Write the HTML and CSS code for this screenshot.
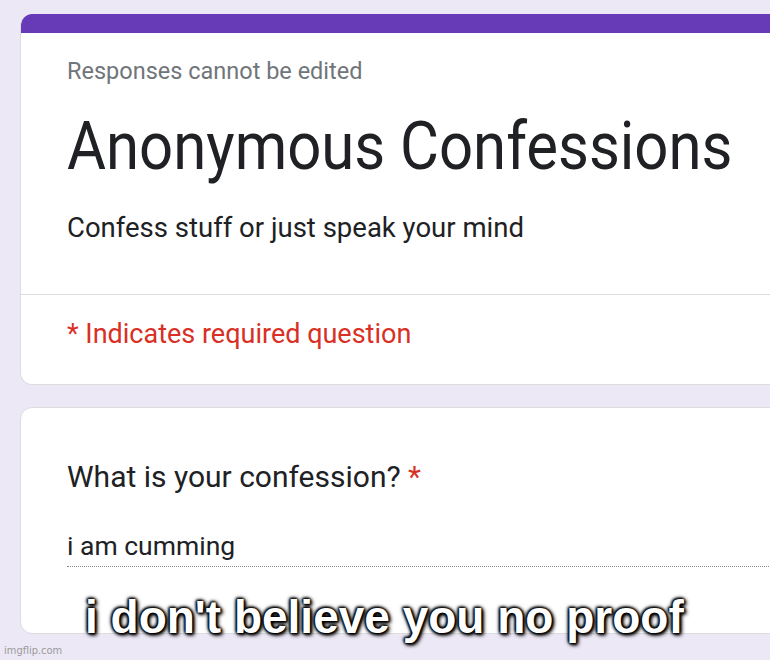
FILE: index.html
```html
<!DOCTYPE html>
<html>
<head>
<meta charset="utf-8">
<link rel="stylesheet" href="styles.css">
</head>
<body>
<main class="page">
  <section class="card header-card">
    <div class="band"></div>
    <div class="header-body">
      <div class="note">Responses cannot be edited</div>
      <h1 class="title">Anonymous Confessions</h1>
      <p class="desc">Confess stuff or just speak your mind</p>
    </div>
    <div class="required-row">* Indicates required question</div>
  </section>
  <section class="card question-card">
    <div class="question">What is your confession? <span class="star">*</span></div>
    <div class="answer">i am cumming</div>
  </section>
</main>
<div class="caption">i don't believe you no proof</div>
<div class="watermark">imgflip.com</div>
</body>
</html>
```
FILE: styles.css
```css
html, body {
  margin: 0;
  padding: 0;
  width: 770px;
  height: 660px;
  overflow: hidden;
  background: #ede8f6;
}
.page {
  padding: 14px 0 0 20px;
  display: flex;
  flex-direction: column;
  gap: 22px;
  font-family: Roboto, "Noto Sans", sans-serif;
  color: #202124;
}
.card {
  width: 820px;
  background: #fff;
  border: 1px solid #dadce0;
  border-radius: 12px;
  box-sizing: border-box;
  overflow: hidden;
}
.header-card {
  border-top: none;
}
.band {
  height: 19px;
  background: #673ab7;
}
.header-body {
  padding: 23px 0 50px 46px;
  border-bottom: 1px solid #dadce0;
}
.note {
  font-size: 23.5px;
  line-height: 30px;
  color: #70757a;
}
.title {
  margin: 23px 0 0 0;
  font-size: 66px;
  line-height: 76px;
  font-weight: 400;
  white-space: nowrap;
  transform: scaleX(0.907);
  transform-origin: left center;
}
.desc {
  margin: 27px 0 0 0;
  font-size: 27.5px;
  line-height: 32px;
}
.required-row {
  padding: 23px 0 34px 46px;
  font-size: 27px;
  line-height: 32px;
  color: #d93025;
}
.question-card {
  padding: 51px 0 0 46px;
  height: 227px;
}
.question {
  font-size: 30px;
  line-height: 36px;
}
.star {
  color: #d93025;
}
.answer {
  margin-top: 35px;
  font-size: 26.5px;
  line-height: 32px;
  padding-bottom: 4px;
  border-bottom: 1px dotted #8a8a8a;
}
.caption {
  position: absolute;
  left: 85px;
  top: 594px;
  font-family: "Liberation Sans", Arial, sans-serif;
  font-weight: 700;
  font-size: 46px;
  line-height: 46px;
  color: #fff;
  white-space: nowrap;
  text-shadow: 0 0 2px #000, 0 0 3px #000, 1px 1px 3px #000, -1px -1px 3px #000, 2px 2px 4px #000, 0 0 5px #000;
}
.watermark {
  position: absolute;
  left: 4px;
  top: 644px;
  font-family: "Liberation Sans Narrow", "DejaVu Sans Condensed", "Liberation Sans", sans-serif;
  font-size: 11px;
  line-height: 14px;
  color: #9a9a9a;
}
```
